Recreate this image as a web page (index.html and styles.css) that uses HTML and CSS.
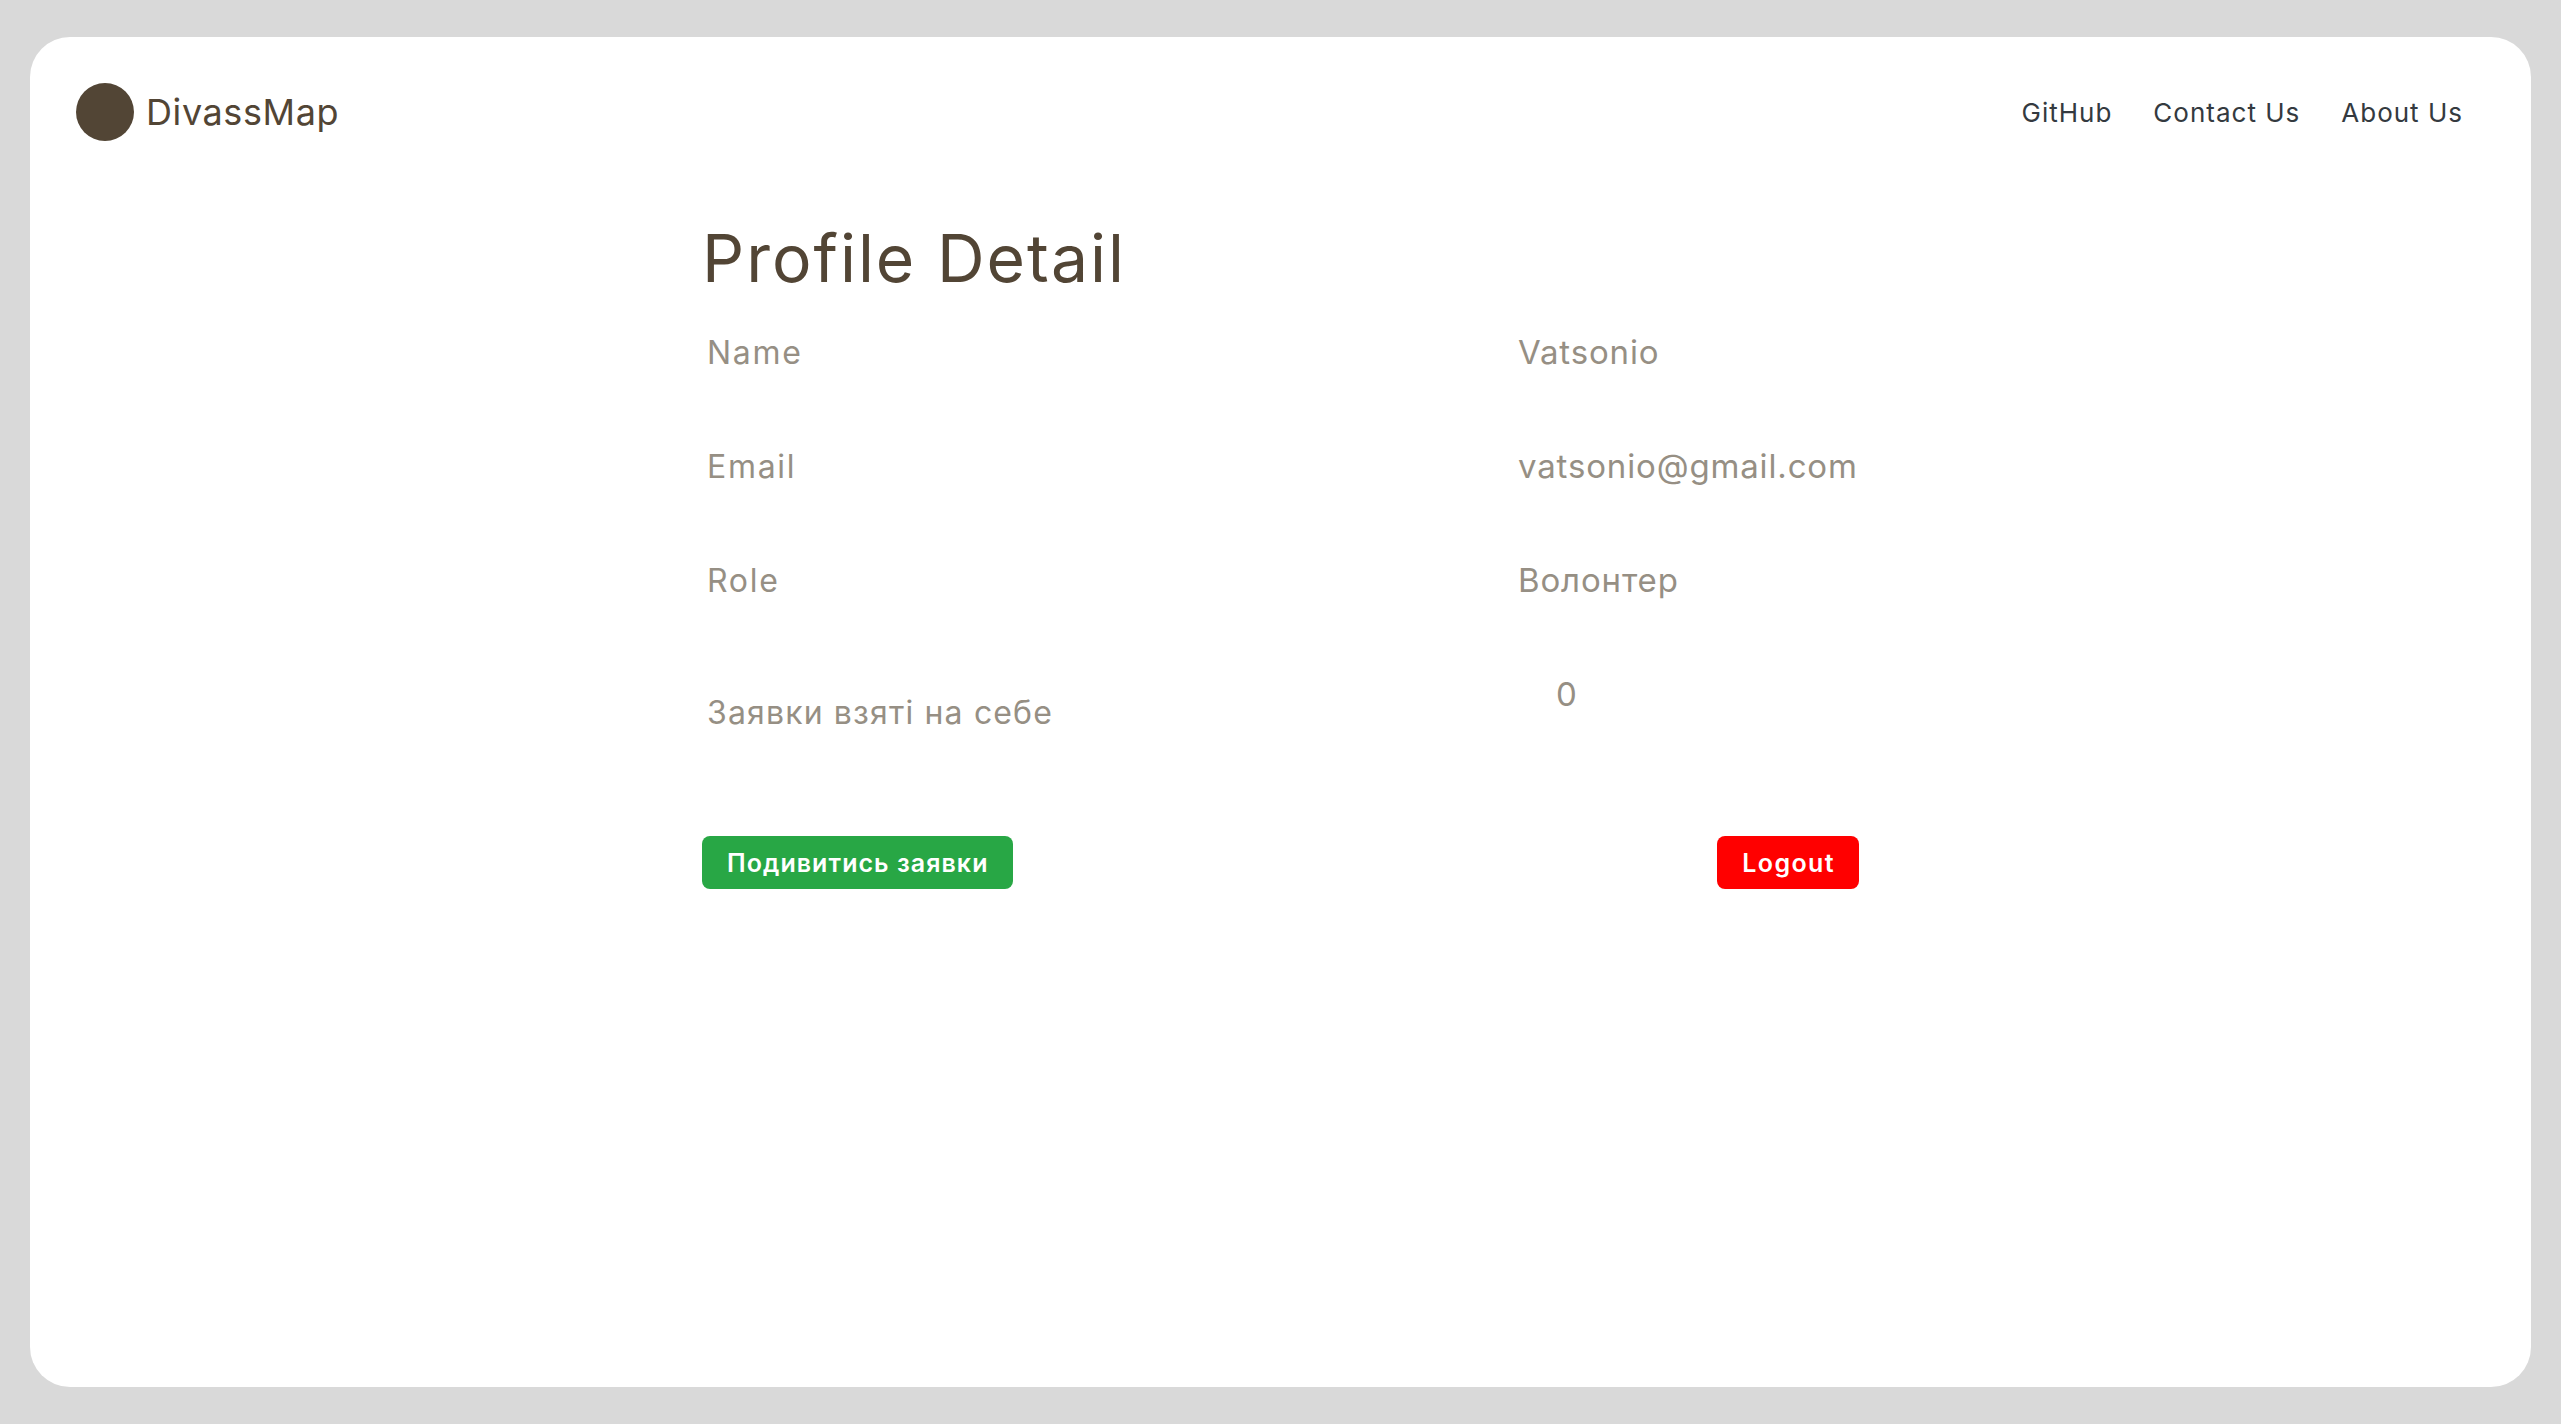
FILE: index.html
```html
<!DOCTYPE html>
<html lang="en">
<head>
<meta charset="utf-8">
<title>DivassMap</title>
<link rel="stylesheet" href="styles.css">
</head>
<body>
<div class="card">
  <header class="nav">
    <div class="brand"><span class="logo"></span><span class="brand-name">DivassMap</span></div>
    <nav class="links"><a>GitHub</a><a>Contact Us</a><a>About Us</a></nav>
  </header>
  <main class="content">
    <h1 class="title">Profile Detail</h1>
    <div class="rows">
      <div class="row"><span>Name</span><span class="value">Vatsonio</span></div>
      <div class="row"><span>Email</span><span class="value">vatsonio@gmail.com</span></div>
      <div class="row"><span>Role</span><span class="value">Волонтер</span></div>
      <div class="row row-count"><span class="count-label">Заявки взяті на себе</span><span class="value count">0</span></div>
    </div>
    <div class="actions">
      <button class="btn btn-green">Подивитись заявки</button>
      <button class="btn btn-red">Logout</button>
    </div>
  </main>
</div>
</body>
</html>
```
FILE: styles.css
```css
* { box-sizing: border-box; }
html, body { margin: 0; height: 100%; }
body {
  background: #d9d9d9;
  padding: 37px 30px;
  font-family: Inter, "Noto Sans", sans-serif;
}
.card {
  background: #fff;
  border-radius: 40px;
  height: 1350px;
  padding: 46px 68px 0 46px;
}
.nav { display: flex; justify-content: space-between; align-items: center; height: 58px; }
.brand { display: flex; align-items: center; gap: 12px; }
.logo { width: 58px; height: 58px; border-radius: 50%; background: #524535; }
.brand-name { font-size: 36px; color: #524535; letter-spacing: 0.6px; }
.links { display: flex; gap: 41px; font-size: 26px; letter-spacing: 1px; color: #343a40; }
.content { width: 1157px; margin-left: 626px; padding-top: 78px; }
.title { margin: 0 0 35px; font-size: 66px; font-weight: 400; color: #524535; line-height: 1.2; letter-spacing: 2px; }
.row { display: grid; grid-template-columns: 811px 1fr; height: 114px; font-size: 32px; line-height: 40px; letter-spacing: 1.7px; color: #968f84; padding-left: 5px; }
.value { font-size: 33px; letter-spacing: 0.85px; margin-top: -1px; }
.row-count { height: 130px; }
.count-label { padding-top: 18px; letter-spacing: 1.15px; }
.count { padding-left: 38px; }
.actions { display: flex; justify-content: space-between; margin-top: 31px; }
.btn { border: 0; border-radius: 8px; color: #fff; font: 600 25px Inter, "Noto Sans", sans-serif; letter-spacing: 1.05px; height: 53px; padding: 0 24px 0 25px; }
.btn-green { background: #28a745; }
.btn-red { background: #ff0000; letter-spacing: 1.4px; }
```
